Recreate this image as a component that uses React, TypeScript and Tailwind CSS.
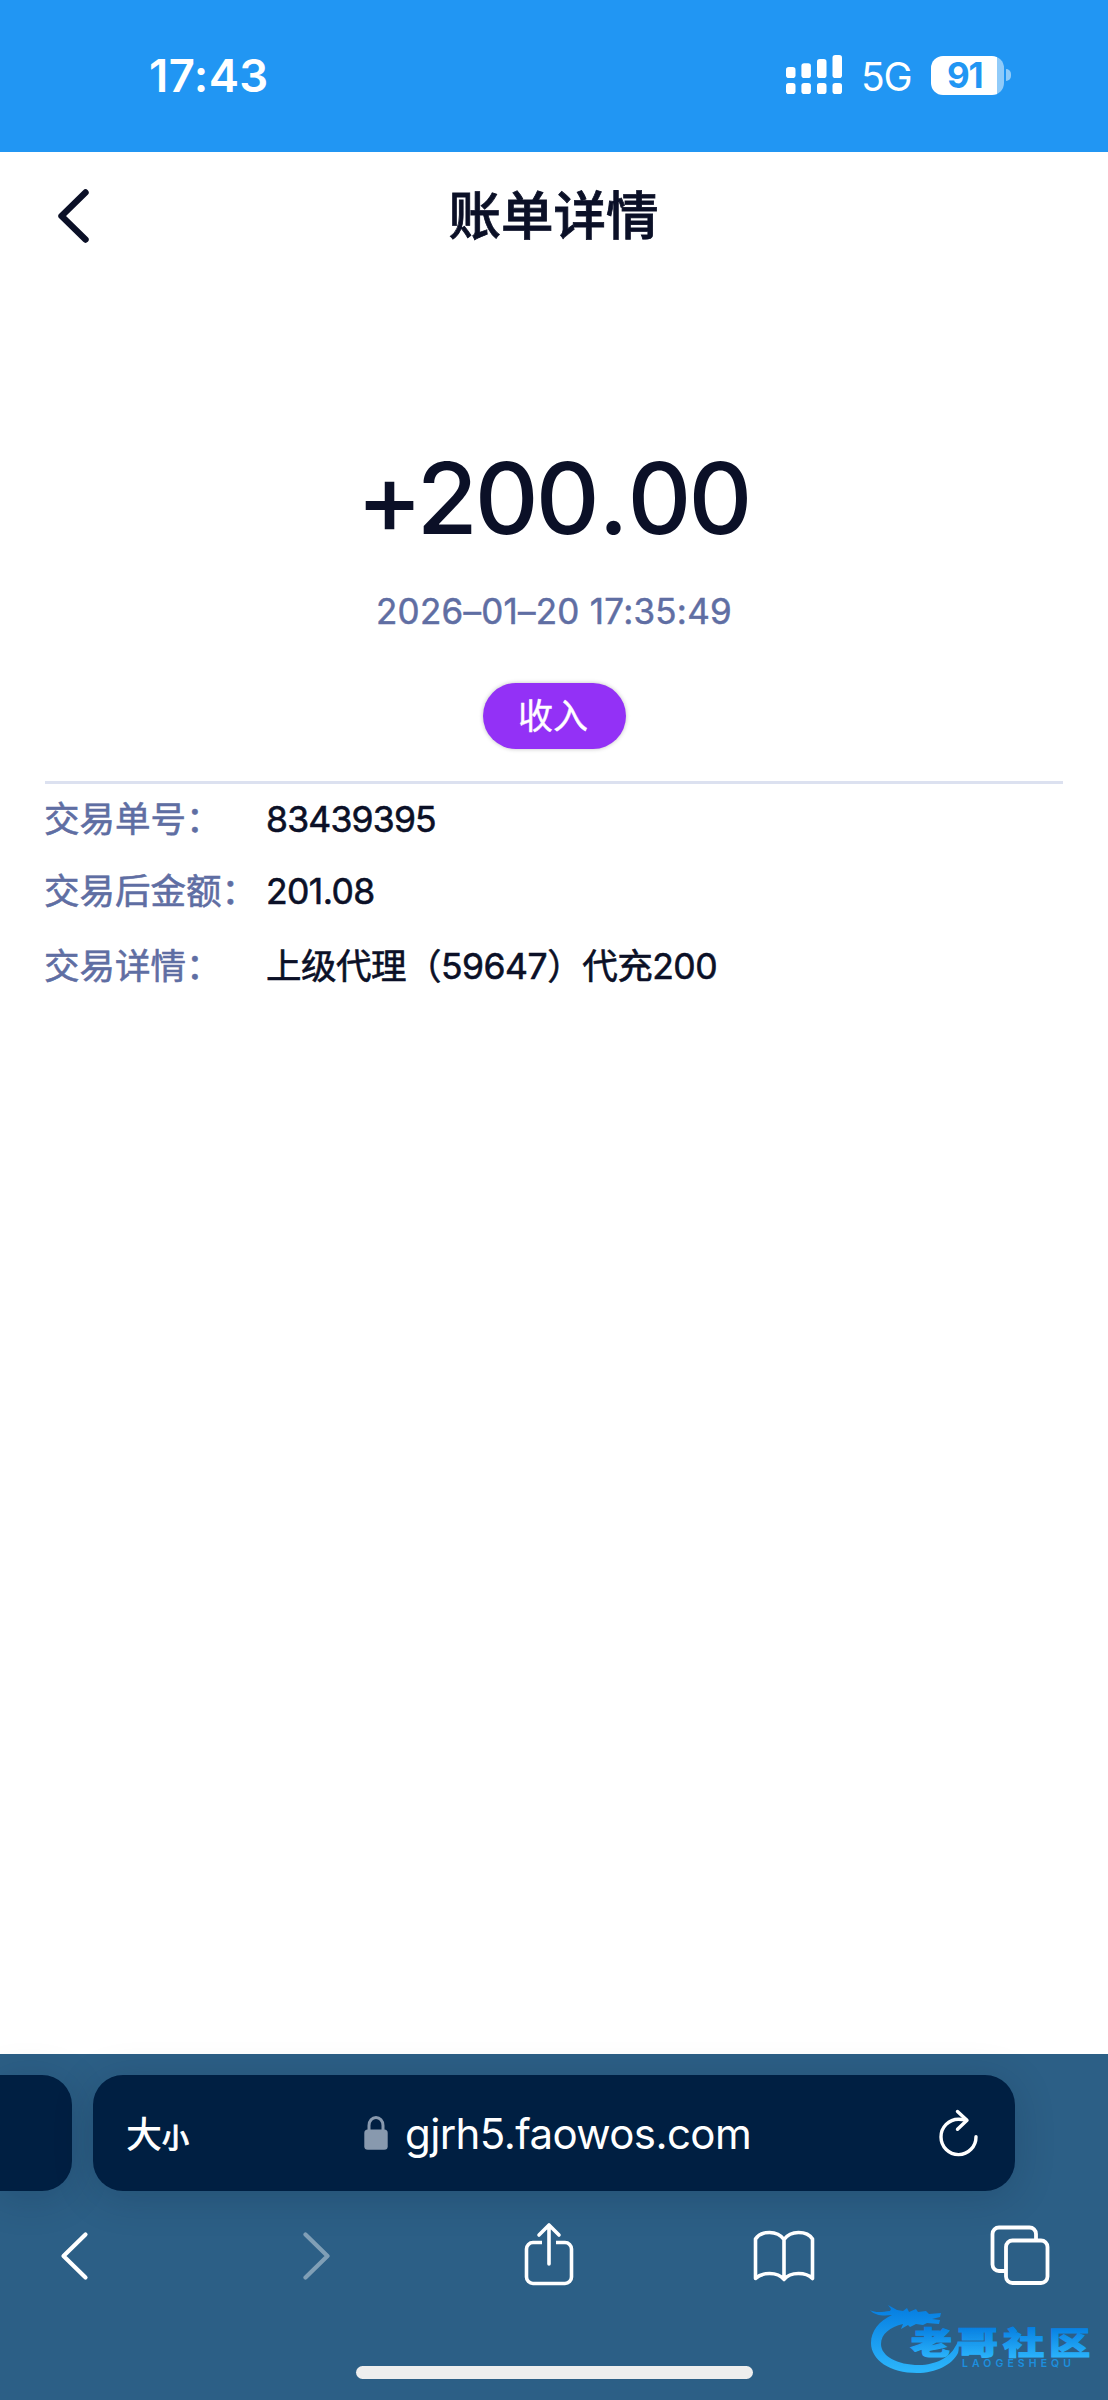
import React from 'react';

const details = [
  { label: '交易单号：', value: '83439395', row: 'h-[72px]', spacing: 'tracking-[-0.8px]' },
  { label: '交易后金额：', value: '201.08', row: 'h-[72px]', spacing: 'tracking-[-0.6px]' },
  { label: '交易详情：', value: '上级代理（59647）代充200', row: 'h-[78px]', spacing: 'tracking-[-0.5px]' },
];

const StatusBar: React.FC = () => (
  <div className="flex h-[152px] items-start justify-between bg-[#2196f3] text-white">
    <span className="ml-[149px] mt-[50px] text-[45.5px] font-semibold leading-[52px] tracking-[0.4px]">17:43</span>
    <div className="mr-[97px] mt-[50px] flex h-[50px] items-center">
      <svg className="h-[40px] w-[57px]" viewBox="0 0 57 40" fill="currentColor">
        <rect x="0" y="12" width="9.5" height="11" rx="2.8" />
        <rect x="15.4" y="8.2" width="9.5" height="14.8" rx="2.8" />
        <rect x="31" y="4" width="9.5" height="19" rx="2.8" />
        <rect x="46.5" y="0" width="9.5" height="23" rx="2.8" />
        <rect x="0" y="28" width="9.5" height="11" rx="2.8" />
        <rect x="15.4" y="28" width="9.5" height="11" rx="2.8" />
        <rect x="31" y="28" width="9.5" height="11" rx="2.8" />
        <rect x="46.5" y="28" width="9.5" height="11" rx="2.8" />
      </svg>
      <span className="ml-[18px] mt-[3px] w-[70px] whitespace-nowrap text-[39px] leading-[50px] tracking-[-1.2px]">5G</span>
      <div className="flex h-[39px] w-[73px] items-center rounded-[12px] bg-[linear-gradient(to_right,#fff_66px,#90cbf9_66px)] pl-[16px]">
        <span className="text-[35px] font-bold leading-[39px] tracking-[-1.2px] text-[#2196f3]">91</span>
      </div>
      <div className="ml-[2px] h-[12px] w-[5px] rounded-r-full bg-white/50" />
    </div>
  </div>
);

const Header: React.FC = () => (
  <header className="grid h-[128px] grid-cols-[140px_1fr_140px] items-center text-[#0b1027]">
    <svg className="ml-[54px] h-[60px] w-[40px]" viewBox="0 0 40 60" fill="none" stroke="currentColor" strokeWidth="6.4" strokeLinecap="round" strokeLinejoin="round">
      <path d="M31.5 6.5 7.5 30l24 23.5" />
    </svg>
    <h1 className="pr-px text-center text-[52.5px] font-medium leading-[60px] [-webkit-text-stroke:0.8px]">账单详情</h1>
  </header>
);

const AddressBar: React.FC = () => (
  <div className="flex h-[116px] gap-[21px]">
    <div className="w-[72px] rounded-r-[30px] bg-[#001f42] shadow-[0_6px_40px_rgba(0,20,40,0.18)]" />
    <div className="flex w-[922px] items-center rounded-[30px] bg-[#001f42] shadow-[0_6px_40px_rgba(0,20,40,0.18)]">
      <div className="flex w-[271px] items-baseline pl-[33px] pt-[3px] font-medium">
        <span className="text-[36px]">大</span>
        <span className="text-[27px] [-webkit-text-stroke:0.8px]">小</span>
      </div>
      <svg className="h-[34px] w-[24px] text-[#8899ae]" viewBox="0 0 24 34">
        <rect x="0.3" y="13.5" width="23.4" height="20.2" rx="3.5" fill="currentColor" />
        <path d="M5 15V9.5a7 8 0 0 1 14 0V15" fill="none" stroke="currentColor" strokeWidth="3" />
      </svg>
      <span className="ml-[17px] mt-[2px] w-[532px] text-[42px] leading-[50px] tracking-[-0.6px]">gjrh5.faowos.com</span>
      <svg className="h-[50px] w-[42px]" viewBox="0 0 42 50" fill="none" stroke="currentColor" strokeWidth="3.4" strokeLinecap="round" strokeLinejoin="round">
        <path d="M29 12.3C26 11.4 23.8 11.2 21.5 11.2A17.5 17.7 0 1 0 39 28.7" />
        <path d="M20.5 3.5 30 12.3l-9.5 9" />
      </svg>
    </div>
  </div>
);

const Toolbar: React.FC = () => (
  <nav className="flex h-[70px] items-center pl-[57px]">
    <svg className="h-[52px] w-[34px]" viewBox="0 0 34 52" fill="none" stroke="currentColor" strokeWidth="4.2" strokeLinecap="round" strokeLinejoin="round">
      <path d="M28.5 4.5 6.5 26l22 21.5" />
    </svg>
    <svg className="ml-[209px] h-[52px] w-[34px] opacity-40" viewBox="0 0 34 52" fill="none" stroke="currentColor" strokeWidth="4.2" strokeLinecap="round" strokeLinejoin="round">
      <path d="M5.5 4.5 27.5 26l-22 21.5" />
    </svg>
    <svg className="ml-[188px] h-[70px] w-[54px]" viewBox="0 0 54 70" fill="none" stroke="currentColor" strokeWidth="3.6" strokeLinejoin="round">
      <path d="M20 21.5h-9a6.5 6.5 0 0 0-6.5 6.5v28a6.5 6.5 0 0 0 6.5 6.5h32a6.5 6.5 0 0 0 6.5-6.5V28a6.5 6.5 0 0 0-6.5-6.5h-9" />
      <path d="M27 43V4M17 14 27 4l10 10" strokeLinecap="round" />
    </svg>
    <svg className="ml-[175px] h-[56px] w-[66px]" viewBox="0 0 66 56" fill="none" stroke="currentColor" strokeWidth="3.6" strokeLinecap="round" strokeLinejoin="round">
      <path d="M33 11.5C29 6 23 4.5 18.5 4.5S7.5 6 4.5 11V50.5C8 47 13 45.5 18.5 45.5S29.5 47 33 51.5c3.5-4.5 9-6 14.5-6S58 47 61.5 50.5V11C58.5 6 52 4.5 47.5 4.5S37 6 33 11.5zV51" />
    </svg>
    <svg className="ml-[173px] h-[62px] w-[62px]" viewBox="0 0 62 62" fill="none" stroke="currentColor" strokeWidth="3.8">
      <path d="M15.5 46H9a6.5 6.5 0 0 1-6.5-6.5V9A6.5 6.5 0 0 1 9 2.5h30.5A6.5 6.5 0 0 1 46 9v6.5" />
      <rect x="16" y="15.5" width="41.5" height="42.5" rx="6.5" />
    </svg>
  </nav>
);

const DragonLogo: React.FC = () => (
  <svg className="absolute bottom-[20px] right-[12px] h-[72px] w-[226px] overflow-visible" viewBox="0 0 226 72">
    <defs>
      <linearGradient id="ring" gradientUnits="userSpaceOnUse" x1="0" y1="0" x2="0" y2="62">
        <stop offset="0" stopColor="#067fe2" />
        <stop offset="1" stopColor="#2bb4fb" />
      </linearGradient>
      <linearGradient id="word" gradientUnits="userSpaceOnUse" x1="0" y1="19" x2="0" y2="50">
        <stop offset="0" stopColor="#067fe2" />
        <stop offset="1" stopColor="#2bb4fb" />
      </linearGradient>
    </defs>
    {/* dragon head, mane and the tail that curls round the name */}
    <path
      fill="url(#ring)"
      d="M0 2c5 3 12 2 20 1l1-2-3-4 9 5 6 1 4-3 2 4 7-3 2 3 8-1 3 3 12-1-1 4-8 2 8 1-1 4-12-1-4 2-7-1-6 3-2-2-7 4 2-5C20 19 11 26 11 36c0 12 16 21 38 21 17 0 31-8 36-18l3-5c1 4 1 7 0 11-6 12-22 20-41 20C20 65 1 52 1 35 1 23 9 13 22 7 14 8 5 8 0 2z"
    />
    <text fill="url(#word)" stroke="url(#word)" strokeWidth="1.1" fontSize="31" fontWeight="900" letterSpacing="3.7" x="0.5" y="46" transform="translate(40 0) scale(1.33 1)">老哥社区</text>
    <text fill="#1c8fdf" fontSize="10.5" fontWeight="600" x="92" y="59" textLength="109">LAOGESHEQU</text>
  </svg>
);

export default function App() {
  return (
    <div className="flex h-[2400px] w-[1108px] flex-col overflow-hidden bg-white font-['Inter','Noto_Sans_CJK_SC',sans-serif] [font-feature-settings:'calt'_0]">
      <StatusBar />
      <Header />

      <main className="flex flex-1 flex-col items-center px-[45px]">
        <div className="mt-[158px] pr-[2px] text-[99px] font-medium leading-[120px] tracking-[-3px] text-[#0b1027]">
          +200<span className="mx-[2px]">.</span>00
        </div>
        <div className="mt-[30px] text-[35px] leading-[46px] tracking-[0.25px] text-[#5f6ea3] [-webkit-text-stroke:0.5px]">2026–01–20 17:35:49</div>
        <div className="mt-[49px] flex h-[66px] w-[143px] items-center justify-center rounded-full bg-[#9331f6] pr-[2px] text-[35px] leading-[50px] text-white shadow-[0_0_4px_rgba(0,0,0,0.25)] [-webkit-text-stroke:0.4px]">
          收入
        </div>

        <div className="mt-[32px] w-full border-t-[3px] border-[#dce1f0] [-webkit-text-stroke:0.6px]">
          {details.map((item) => (
            <div key={item.label} className={`flex items-center text-[35.5px] leading-[50px] ${item.row}`}>
              <span className="-ml-px w-[222px] shrink-0 whitespace-nowrap text-[#5f6ea3]">{item.label}</span>
              <span className={`whitespace-nowrap text-[#0b1027] ${item.spacing}`}>{item.value}</span>
            </div>
          ))}
        </div>
      </main>

      <footer className="relative h-[346px] bg-[#2c5f86] pt-[21px] text-white">
        <AddressBar />
        <div className="mt-[30px]">
          <Toolbar />
        </div>
        <div className="mx-auto mt-[75px] h-[13px] w-[397px] rounded-full bg-[#eeeeee]" />
        <DragonLogo />
      </footer>
    </div>
  );
}
